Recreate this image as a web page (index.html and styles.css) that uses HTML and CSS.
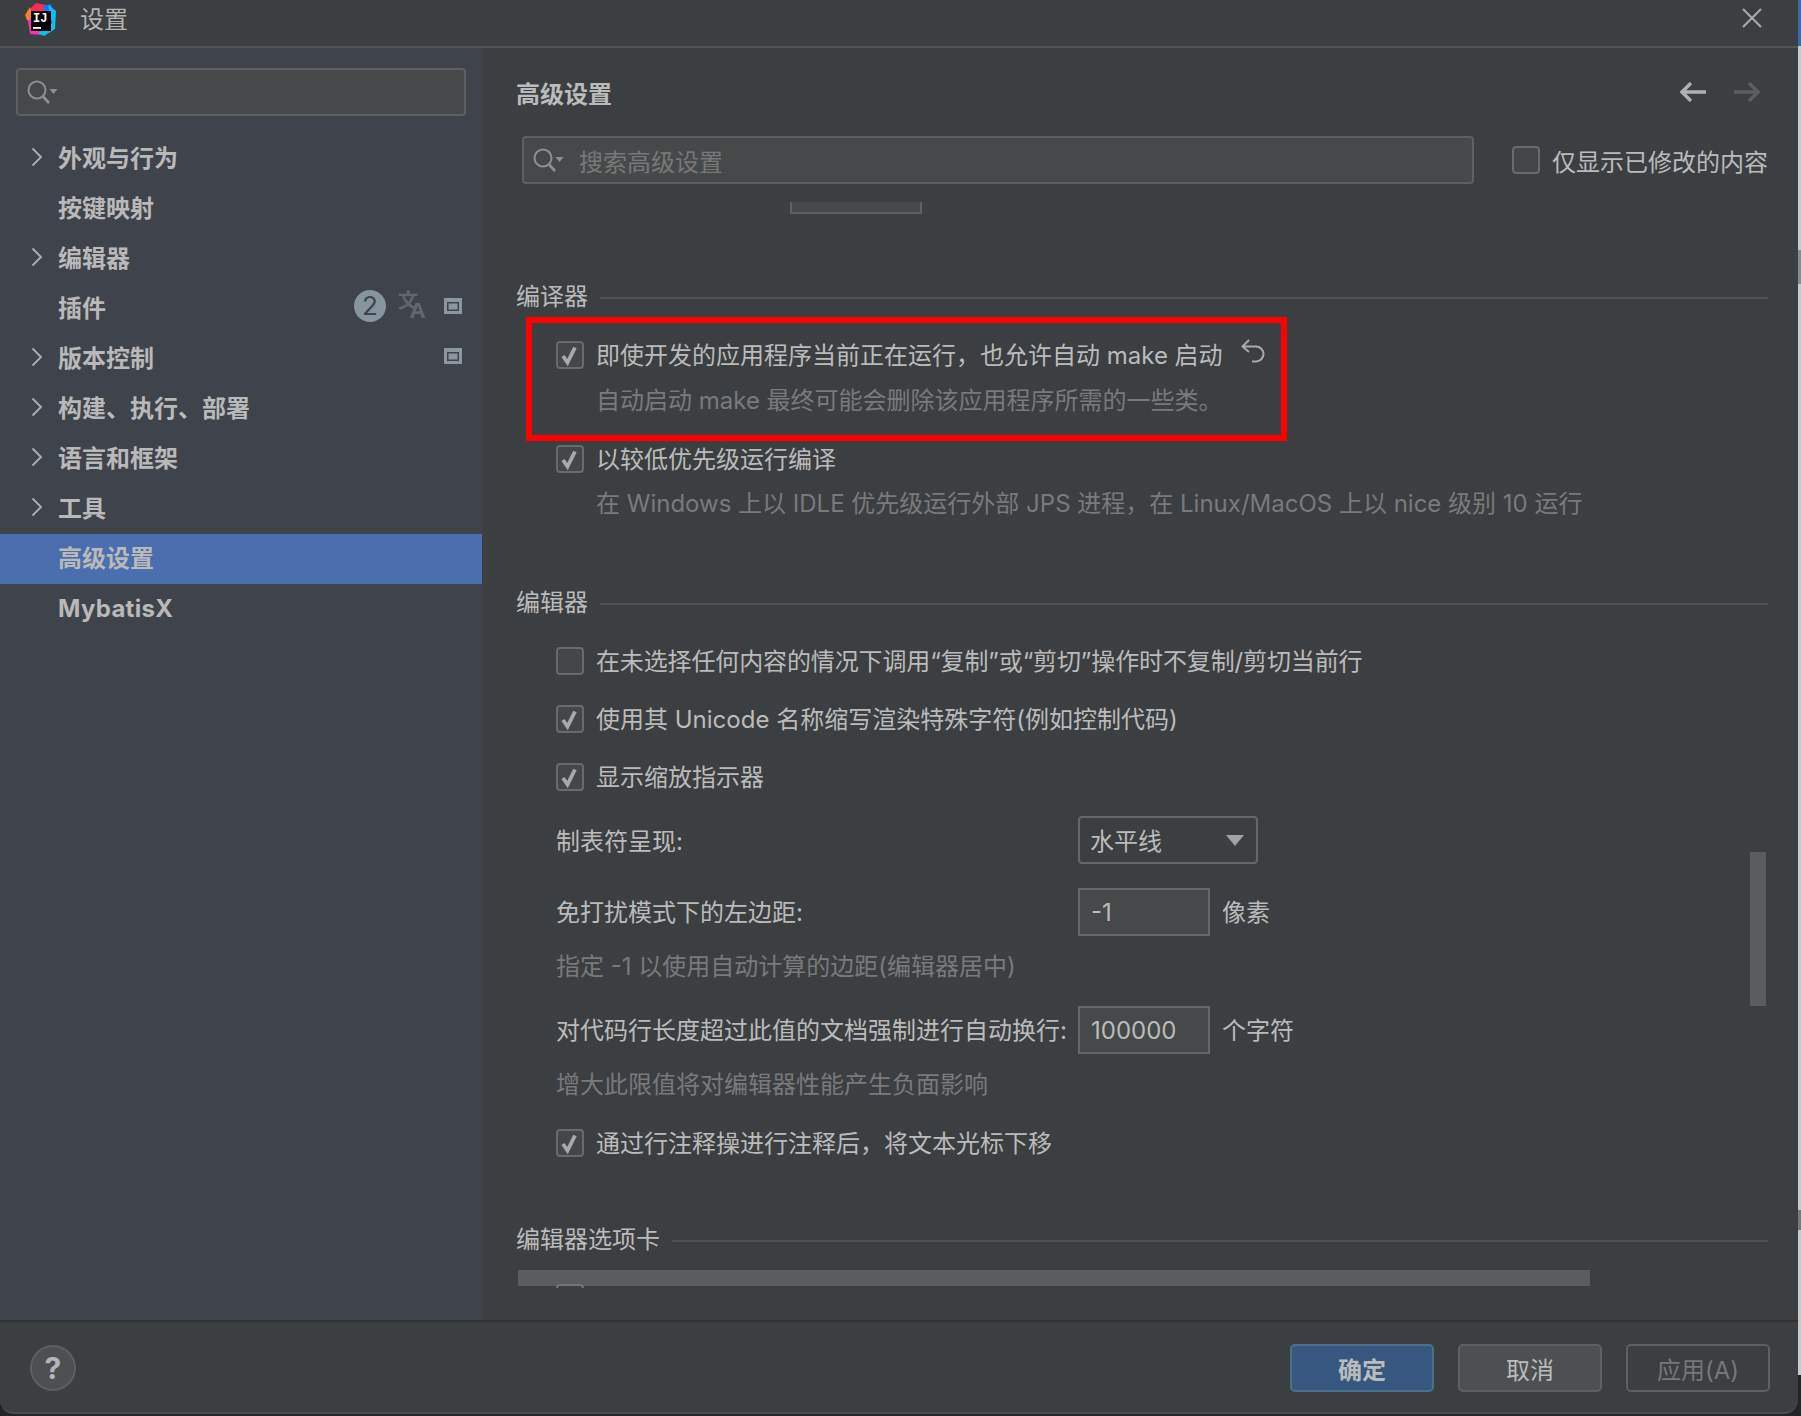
FILE: index.html
```html
<!DOCTYPE html>
<html lang="zh-CN">
<head>
<meta charset="utf-8">
<title>设置</title>
<link rel="stylesheet" href="styles.css">
</head>
<body>
<svg class="defs" width="0" height="0">
  <symbol id="chev" viewBox="0 0 12 20"><path d="M1.5 1.5 10 10l-8.500 8.500" fill="none" stroke="currentColor" stroke-width="2"/></symbol>
  <symbol id="check" viewBox="0 0 24 24"><path d="M5 13 9.500 19.500 17 4.500" fill="none" stroke="currentColor" stroke-width="3.800"/></symbol>
  <symbol id="find" viewBox="0 0 32 24"><circle cx="11" cy="10" r="8.500" fill="none" stroke="currentColor" stroke-width="2"/><path d="M17 16.500 23 23" stroke="currentColor" stroke-width="2.600" fill="none"/><path d="M23.500 9h8l-4 5z" fill="currentColor"/></symbol>
  <symbol id="proj" viewBox="0 0 18 16"><rect width="18" height="16" fill="#8b979f"/><rect x="3" y="4" width="12" height="9" fill="#3f434c"/><rect x="4.500" y="5.500" width="9" height="6" fill="#8b979f"/></symbol>
</svg>
<div class="screen">
  <div class="window">
    <header class="titlebar">
      <svg class="logo" width="34" height="34" viewBox="0 0 34 34">
        <polygon points="6,6 12,0 22,2 22,10 8,20" fill="#fe2857"/>
        <polygon points="1,12 6,4 10,20 3,17" fill="#fc801d"/>
        <polygon points="4,18 10,12 18,32 6,31" fill="#fe2eb6"/>
        <polygon points="19,3 27,1 32,14 22,14" fill="#087cfa"/>
        <polygon points="24,2 32,8 31,26 20,33 14,30 28,20" fill="#07c3f2"/>
        <rect x="7" y="8" width="20" height="20" fill="#000"/>
        <text x="9" y="19" class="logo-text">IJ</text>
        <rect x="9" y="24" width="8" height="1.800" fill="#fff"/>
      </svg>
      <span class="title">设置</span>
      <svg class="close" width="20" height="20" viewBox="0 0 20 20"><path d="M1 1l18 18M19 1 1 19" stroke="currentColor" stroke-width="2" fill="none"/></svg>
    </header>
    <div class="body">
      <aside class="sidebar">
        <div class="field side-search"><svg class="find" width="32" height="24"><use href="#find"/></svg></div>
        <nav class="tree">
          <div class="node"><svg class="chev" width="12" height="20"><use href="#chev"/></svg><span>外观与行为</span></div>
          <div class="node leaf"><span>按键映射</span></div>
          <div class="node"><svg class="chev" width="12" height="20"><use href="#chev"/></svg><span>编辑器</span></div>
          <div class="node leaf"><span>插件</span>
            <div class="extras">
              <span class="badge">2</span>
              <svg class="lang" width="44" height="44" viewBox="-6 -5 44 44"><text x="0" y="19" class="lang-a">文</text><text x="12" y="29" class="lang-b">A</text></svg>
              <svg class="proj" width="18" height="16"><use href="#proj"/></svg>
            </div>
          </div>
          <div class="node"><svg class="chev" width="12" height="20"><use href="#chev"/></svg><span>版本控制</span>
            <div class="extras"><svg class="proj" width="18" height="16"><use href="#proj"/></svg></div>
          </div>
          <div class="node"><svg class="chev" width="12" height="20"><use href="#chev"/></svg><span>构建、执行、部署</span></div>
          <div class="node"><svg class="chev" width="12" height="20"><use href="#chev"/></svg><span>语言和框架</span></div>
          <div class="node"><svg class="chev" width="12" height="20"><use href="#chev"/></svg><span>工具</span></div>
          <div class="node leaf selected"><span>高级设置</span></div>
          <div class="node leaf"><span class="latin">MybatisX</span></div>
        </nav>
      </aside>
      <main class="main">
        <div class="heading">
          <h1>高级设置</h1>
          <svg class="nav-arrow back" width="26" height="20" viewBox="0 0 26 20"><path d="M26 10H3M11 1 2 10l9 9" fill="none" stroke="currentColor" stroke-width="3.400"/></svg>
          <svg class="nav-arrow fwd" width="26" height="20" viewBox="0 0 26 20"><path d="M0 10h23M15 1l9 9-9 9" fill="none" stroke="currentColor" stroke-width="3.400"/></svg>
        </div>
        <div class="filter">
          <div class="field main-search"><svg class="find" width="32" height="24"><use href="#find"/></svg><span class="placeholder">搜索高级设置</span></div>
          <label class="opt filter-opt"><span class="box"></span><span class="filter-text">仅显示已修改的内容</span></label>
        </div>
        <div class="scroll">
          <div class="cut-input"></div>

          <div class="sec first"><span>编译器</span><i></i></div>
          <div class="opt r1"><span class="box"><svg width="24" height="24"><use href="#check"/></svg></span><span>即使开发的应用程序当前正在运行，也允许自动 make 启动</span>
            <svg class="undo" width="24" height="24" viewBox="0 0 24 24"><path d="M8 1 1.500 7.500 8 13M2 7.500h13a7.500 7.500 0 0 1 0 15h-4" fill="none" stroke="currentColor" stroke-width="2"/></svg>
          </div>
          <p class="hint in r2">自动启动 make 最终可能会删除该应用程序所需的一些类。</p>
          <div class="opt r3"><span class="box"><svg width="24" height="24"><use href="#check"/></svg></span><span>以较低优先级运行编译</span></div>
          <p class="hint in r2b">在 Windows 上以 IDLE 优先级运行外部 JPS 进程，在 Linux/MacOS 上以 nice 级别 10 运行</p>
          <div class="redbox"></div>

          <div class="sec sec-b"><span>编辑器</span><i></i></div>
          <div class="opt r4"><span class="box"></span><span class="tight">在未选择任何内容的情况下调用“复制”或“剪切”操作时不复制/剪切当前行</span></div>
          <div class="opt r5"><span class="box"><svg width="24" height="24"><use href="#check"/></svg></span><span>使用其 Unicode 名称缩写渲染特殊字符(例如控制代码)</span></div>
          <div class="opt r5"><span class="box"><svg width="24" height="24"><use href="#check"/></svg></span><span>显示缩放指示器</span></div>
          <div class="form r6"><span class="flabel">制表符呈现:</span><div class="select"><span>水平线</span><svg width="18" height="11" viewBox="0 0 18 11"><path d="M0 0h18L9 11z" fill="currentColor"/></svg></div></div>
          <div class="form r7"><span class="flabel">免打扰模式下的左边距:</span><div class="input"><span>-1</span></div><span class="unit">像素</span></div>
          <p class="hint r8">指定 -1 以使用自动计算的边距(编辑器居中)</p>
          <div class="form r9"><span class="flabel">对代码行长度超过此值的文档强制进行自动换行:</span><div class="input"><span>100000</span></div><span class="unit">个字符</span></div>
          <p class="hint r8">增大此限值将对编辑器性能产生负面影响</p>
          <div class="opt r10"><span class="box"><svg width="24" height="24"><use href="#check"/></svg></span><span>通过行注释操进行注释后，将文本光标下移</span></div>

          <div class="sec sec-c"><span>编辑器选项卡</span><i></i></div>
          <div class="hbar"></div>
          <div class="cut-box"></div>
        </div>
      </main>
    </div>
    <footer class="footer">
      <span class="help">?</span>
      <div class="buttons">
        <span class="btn ok">确定</span>
        <span class="btn">取消</span>
        <span class="btn off">应用(A)</span>
      </div>
    </footer>
  </div>
  <div class="strip"></div>
</div>
</body>
</html>
```

FILE: styles.css
```css
* { box-sizing: border-box; }
html, body { margin: 0; padding: 0; }
body {
  width: 1801px;
  height: 1416px;
  overflow: hidden;
  background: #232425;
  color: #bbbbbb;
  font-family: "Inter", "Noto Sans CJK SC", sans-serif;
  font-size: 24px;
}
.defs { position: absolute; }
.screen { display: flex; width: 1801px; height: 1416px; }
.window {
  width: 1798px;
  height: 1414px;
  display: flex;
  flex-direction: column;
  background: #3c3f41;
  border-bottom: 2px solid #4a4c4e;
  border-radius: 0 0 14px 14px;
  overflow: hidden;
}
.strip {
  width: 3px;
  height: 1375px;
  background: linear-gradient(#3f68a8 0 46px, #c9c9c9 46px 250px, #8b8b8b 250px 284px, #c9c9c9 284px 1210px, #77797b 1210px 1230px, #c9c9c9 1230px);
}

/* title bar */
.titlebar {
  height: 48px;
  flex: none;
  display: flex;
  align-items: center;
  padding: 0 36px 0 24px;
  border-bottom: 2px solid #515355;
}
.logo { flex: none; margin-top: -6px; }
.logo-text { font: 700 12px "Liberation Mono", monospace; fill: #fff; }
.title { margin-left: 22px; margin-top: -12px; color: #b4b4b4; }
.close { margin-left: auto; margin-top: -10px; color: #a9a9a9; }

.body { flex: 1; display: flex; min-height: 0; }

/* sidebar */
.sidebar { width: 482px; flex: none; background: #3f434c; padding: 20px 16px 0; }
.field {
  display: flex;
  align-items: center;
  background: #45494a;
  border: 2px solid #5e6060;
  border-radius: 4px;
  height: 48px;
}
.find { color: #8d9092; margin-left: 8px; flex: none; }
.tree { margin: 18px -16px 0; }
.node {
  height: 50px;
  display: flex;
  align-items: center;
  padding: 0 20px 0 31px;
  font-weight: 700;
  color: #b9b9b9;
  line-height: 1;
}
.node > span { margin-left: 15px; margin-top: -1px; }
.node.leaf > span { margin-left: 27px; }
.latin { letter-spacing: 0.3px; }
.chev { color: #a9abad; flex: none; margin-top: -5px; }
.selected { background: #4b6eaf; }
.extras { margin-left: auto; display: flex; align-items: center; margin-top: -6px; }
.badge {
  width: 32px;
  height: 32px;
  border-radius: 50%;
  background: #87959e;
  color: #3f434c;
  font-size: 26px;
  font-weight: 400;
  display: flex;
  align-items: center;
  justify-content: center;
  margin-right: 12px;
}
.lang { margin: -5px 8px -5px -6px; }
.lang-a { font: 700 20px "Noto Sans CJK SC", sans-serif; fill: #62676c; }
.lang-b { font: 700 22px "Open Sans", sans-serif; fill: #62676c; }

/* main */
.main { flex: 1; display: flex; flex-direction: column; padding-left: 34px; min-width: 0; }
.heading { height: 88px; flex: none; display: flex; align-items: center; padding-right: 38px; }
h1 { margin: 1px auto 0 0; font-size: 24px; font-weight: 700; color: #bbbbbb; }
.nav-arrow { flex: none; margin-top: -1px; }
.back { color: #aeb0b2; }
.fwd { color: #5c5f61; margin-left: 28px; }
.filter { flex: none; height: 48px; display: flex; align-items: center; }
.main-search { width: 952px; margin-left: 6px; flex: none; }
.placeholder { margin-left: 15px; color: #787878; }

.scroll { flex: 1; position: relative; overflow: hidden; padding: 18px 30px 0 0; min-height: 0; }
.cut-input {
  margin-left: 274px;
  width: 132px;
  height: 12px;
  background: #45494a;
  border: 2px solid #5e6060;
  border-top: 0;
}
.sec { height: 34px; margin-top: 63px; display: flex; align-items: center; line-height: 1; }
.sec > span { margin-top: 2px; }
.sec.first { margin-top: 65px; }
.sec.sec-b { margin-top: 65px; }
.sec.sec-c { margin-top: 62px; }
.sec i { flex: 1; height: 2px; background: #4f5152; margin-left: 12px; margin-top: 4px; }
.opt { height: 34px; display: flex; align-items: center; margin-left: 40px; line-height: 1; color: #bbbbbb; }
.opt > span:not(.box) { margin-top: 2px; }
.opt.filter-opt { margin-left: 38px; }
.opt > span.filter-text { margin-top: 6px; }
.tight { letter-spacing: -0.13px; }
.box {
  width: 28px;
  height: 28px;
  flex: none;
  margin-right: 12px;
  margin-top: -1px;
  border: 2px solid #686a6c;
  border-radius: 4px;
  background: #43474a;
  color: #a8a8a8;
  display: flex;
  align-items: center;
  justify-content: center;
}
.box svg { display: block; }
.undo { margin-left: 18px; margin-top: -8px; color: #aaaaaa; flex: none; }
.hint { height: 34px; line-height: 36px; margin: 13px 0 0 40px; color: #787a7c; white-space: nowrap; }
.hint.in { margin-left: 80px; }
.r1 { margin-top: 25px; }
.hint.r2 { margin-top: 11px; }
.hint.r2b { margin-top: 10px; }
.r3 { margin-top: 25px; }
.r4 { margin-top: 25px; }
.r5 { margin-top: 24px; }
.form { height: 48px; display: flex; align-items: center; margin-left: 40px; line-height: 1; }
.r6 { margin-top: 22px; }
.r6 .flabel { margin-top: 4px; }
.r6 .select span { margin-top: 4px; }
.r7 { margin-top: 24px; }
.r9 { margin-top: 23px; }
.hint.r8 { margin-top: 13px; }
.r10 { margin-top: 25px; }
.flabel { width: 522px; flex: none; white-space: nowrap; margin-top: 2px; }
.select {
  width: 180px;
  height: 48px;
  border: 2px solid #646668;
  border-radius: 4px;
  display: flex;
  align-items: center;
  justify-content: space-between;
  padding: 0 12px 0 10px;
  color: #bbbbbb;
}
.select svg { color: #a3a3a3; }
.input {
  width: 132px;
  height: 48px;
  background: #45494a;
  border: 2px solid #646668;
  display: flex;
  align-items: center;
  padding-left: 11px;
}
.input span { margin-top: 2px; }
.unit { margin-left: 12px; margin-top: 2px; }
.hbar { position: relative; height: 16px; width: 1072px; margin: 14px 0 0 2px; background: #5a5c5e; }
.cut-box {
  position: relative;
  width: 28px;
  height: 4px;
  margin: -2px 0 0 40px;
  border: 2px solid #74767a;
  border-bottom: 0;
  border-radius: 4px 4px 0 0;
}

/* overlays */
.redbox {
  position: absolute;
  left: 10px;
  top: 133px;
  width: 761px;
  height: 124px;
  border: 6px solid #ff0000;
}

/* footer */
.footer {
  height: 92px;
  flex: none;
  display: flex;
  align-items: center;
  justify-content: space-between;
  padding: 2px 28px 0 30px;
  border-top: 2px solid #323232;
}
.help {
  width: 46px;
  height: 46px;
  border-radius: 50%;
  background: #4c5052;
  border: 2px solid #5e6060;
  display: flex;
  align-items: center;
  justify-content: center;
  font-weight: 700;
  font-size: 30px;
  color: #b5b5b5;
}
.buttons { display: flex; gap: 24px; }
.btn {
  width: 144px;
  height: 48px;
  border: 2px solid #5e6060;
  border-radius: 5px;
  background: #4c5052;
  display: flex;
  align-items: center;
  justify-content: center;
  color: #bbbbbb;
}
.btn.ok { background: #365880; border-color: #4c708c; font-weight: 700; }
.btn.off { background: #3c3f41; color: #777777; }
.scroll::after {
  content: "";
  position: absolute;
  right: 32px;
  top: 668px;
  width: 16px;
  height: 154px;
  background: #5a5c5e;
}
```
